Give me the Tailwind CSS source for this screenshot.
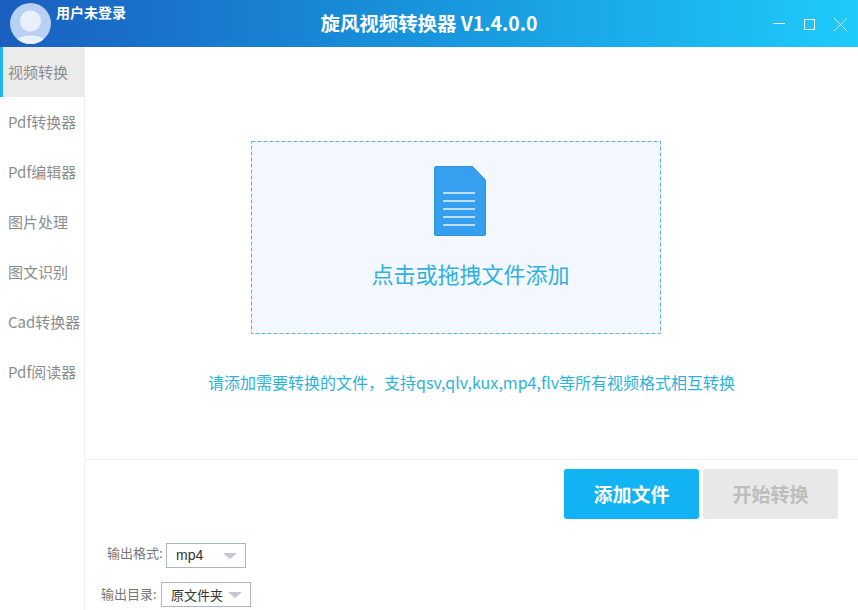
<!DOCTYPE html>
<html lang="zh-CN">
<head>
  <meta charset="UTF-8">
  <title>旋风视频转换器</title>
  <script src="https://cdn.jsdelivr.net/npm/@tailwindcss/browser@4"></script>
</head>
<body class="w-[858px] h-[610px] overflow-hidden bg-white font-['Noto_Sans_CJK_SC','Noto_Sans',sans-serif]">
  <!-- title bar -->
  <header class="relative h-[47px] flex items-center justify-between bg-gradient-to-r from-[#1a5fbe] to-[#1ecbfb] text-white">
    <div class="flex items-start pl-[10px] h-full pt-[3px]">
      <svg width="41" height="41" viewBox="0 0 41 41" class="shrink-0">
        <defs><clipPath id="av"><circle cx="20.5" cy="20.5" r="20.5"/></clipPath></defs>
        <circle cx="20.5" cy="20.5" r="20.5" fill="#b9d0f5"/>
        <g clip-path="url(#av)">
          <circle cx="20.5" cy="18" r="10.5" fill="#e9f0fb"/>
          <ellipse cx="20.5" cy="40" rx="16" ry="7.5" fill="#e9f0fb"/>
        </g>
      </svg>
      <span class="ml-[5px] text-[14px] leading-[18px] font-bold">用户未登录</span>
    </div>
    <h1 class="absolute left-0 top-[10px] w-[858px] text-center text-[19.4px] leading-[26px] font-bold">旋风视频转换器 V1.4.0.0</h1>
    <div class="flex items-center gap-[19px] pr-[11px] pt-[1px]">
      <svg width="12" height="12" viewBox="0 0 12 12" fill="none" stroke="#fff" stroke-width="1"><path d="M0 5.500h12"/></svg>
      <svg width="11" height="11" viewBox="0 0 11 11" fill="none" stroke="#fff" stroke-width="1"><path d="M.5.5h10v10H.5z"/></svg>
      <svg width="13" height="13" viewBox="0 0 13 13" fill="none" stroke="#fff" stroke-width="0.8"><path d="M0 0l13 13M13 0L0 13"/></svg>
    </div>
  </header>

  <div class="flex h-[563px]">
    <!-- side nav -->
    <nav class="w-[85px] shrink-0 border-r border-[#eeeeee] text-[15px] text-[#8c8c8c]">
      <div class="h-[50px] flex items-center pl-[5px] bg-[#ebebeb] border-l-[3px] border-[#22b4ee]">视频转换</div>
      <div class="h-[50px] flex items-center pl-[8px] whitespace-nowrap">Pdf转换器</div>
      <div class="h-[50px] flex items-center pl-[8px] whitespace-nowrap">Pdf编辑器</div>
      <div class="h-[50px] flex items-center pl-[8px]">图片处理</div>
      <div class="h-[50px] flex items-center pl-[8px]">图文识别</div>
      <div class="h-[50px] flex items-center pl-[8px] whitespace-nowrap">Cad转换器</div>
      <div class="h-[50px] flex items-center pl-[8px] whitespace-nowrap">Pdf阅读器</div>
    </nav>

    <main class="flex-1 flex flex-col">
      <div class="h-[413px] border-b border-[#eeeeee] flex flex-col pt-[94px]">
        <!-- drop zone -->
        <div class="relative w-[410px] h-[193px] ml-[166px] flex flex-col items-center bg-[#f2f8fe] pt-[25px]">
          <svg class="absolute inset-0" width="410" height="193" fill="none">
            <rect x=".5" y=".5" width="409" height="192" stroke="#5fb2d2" stroke-dasharray="4 2"/>
          </svg>
          <svg class="ml-[8px]" width="52" height="70" viewBox="0 0 52 70">
            <path d="M2 .5h36.500L51.500 14v54a1.500 1.500 0 0 1-1.500 1.500H2A1.500 1.500 0 0 1 .5 68V2A1.500 1.500 0 0 1 2 .5z" fill="#379ff0" stroke="#2f93dc"/>
            <path d="M9 27h32M9 35h32M9 43h32M9 51h32M9 59h32" stroke="#eaf5fe" stroke-width="1.500"/>
          </svg>
          <p class="mt-[21px] ml-[29px] text-[22px] leading-[32px] text-[#30b0de] whitespace-nowrap">点击或拖拽文件添加</p>
        </div>
        <p class="mt-[36px] text-center text-[16px] leading-[24px] text-[#2db2dc] whitespace-nowrap">请添加需要转换的文件，支持qsv,qlv,kux,mp4,flv等所有视频格式相互转换</p>
      </div>

      <!-- actions -->
      <div class="flex justify-end gap-[4px] pr-[20px] pt-[9px]">
        <button class="w-[135px] h-[50px] rounded-[3px] bg-[#12b3f3] text-white text-[19px] font-bold">添加文件</button>
        <button class="w-[135px] h-[50px] rounded-[3px] bg-[#e8e8e8] text-[#bdbdbd] text-[19px] font-bold">开始转换</button>
      </div>

      <!-- output options -->
      <div class="flex items-center mt-[24px] pl-[22px] text-[13px] text-[#777777]">
        <span class="w-[59px] whitespace-nowrap pb-[5px]">输出格式:</span>
        <div class="w-[80px] h-[25px] flex items-center justify-between border border-[#a9b7c4] pl-[9px] pr-[8px] text-[14px] text-[#333333] font-['Liberation_Sans']">
          mp4
          <svg width="14" height="6" viewBox="0 0 14 6"><path d="M0 0h14L7 6z" fill="#c3c8ce"/></svg>
        </div>
      </div>
      <div class="flex items-center mt-[14px] pl-[16px] text-[13px] text-[#777777]">
        <span class="w-[60px] whitespace-nowrap pb-[2px]">输出目录:</span>
        <div class="w-[90px] h-[25px] flex items-center justify-between border border-[#a9b7c4] pl-[9px] pr-[8px] text-[13px] text-[#333333] whitespace-nowrap">
          原文件夹
          <svg width="14" height="6" viewBox="0 0 14 6"><path d="M0 0h14L7 6z" fill="#c3c8ce"/></svg>
        </div>
      </div>
    </main>
  </div>
</body>
</html>
